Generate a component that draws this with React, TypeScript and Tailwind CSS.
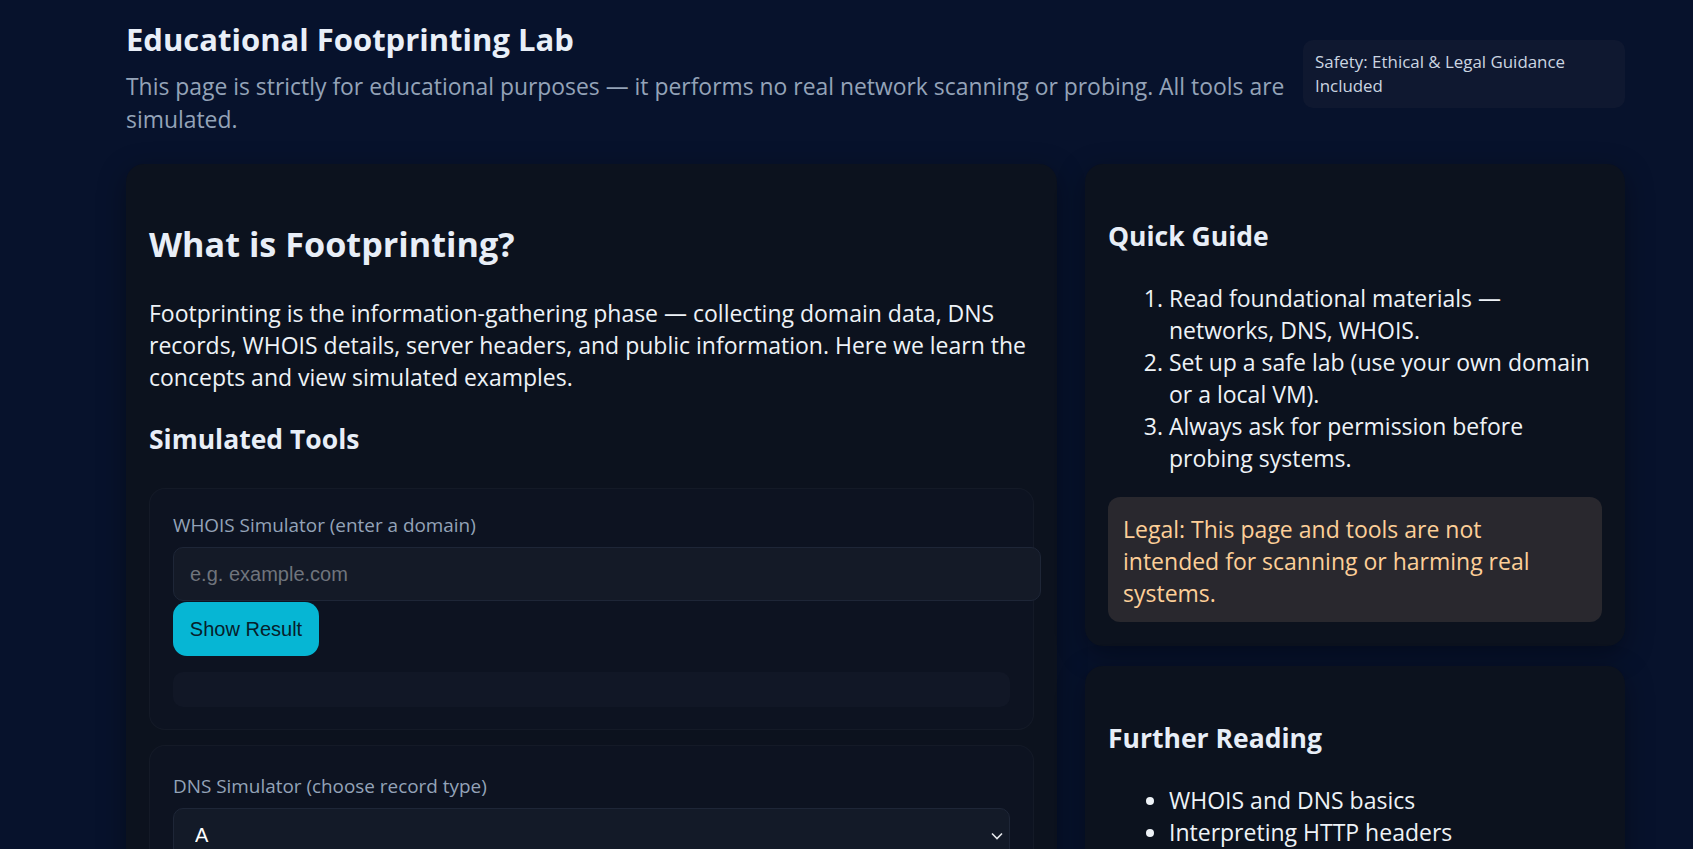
import { useState } from 'react'

// Учебная страница — всё симулировано, никаких реальных запросов.

const recordTypes = ['A', 'AAAA', 'MX', 'NS', 'TXT', 'CNAME']

export default function App() {
  const [domain, setDomain] = useState('')
  const [whoisResult, setWhoisResult] = useState('')
  const [record, setRecord] = useState('A')

  const showWhois = () => {
    if (!domain) return
    setWhoisResult(`Domain: ${domain} — Registrar: Example Registrar (simulated)`)
  }

  return (
    <div className="min-h-screen bg-[#07122c] pb-10 font-['Open_Sans',sans-serif]">
      <div className="ml-[126px] w-[1499px] pt-[19px]">
        {/* Header */}
        <header className="flex items-start gap-3">
          <div className="flex-1">
            <h1 className="text-[31px] font-bold leading-[40px] text-[#e9eff8]">
              Educational Footprinting Lab
            </h1>
            <p className="mt-[11px] text-[22.9px] leading-[33px] text-[#94a3b8]">
              This page is strictly for educational purposes — it performs no real network scanning or
              probing. All tools are simulated.
            </p>
          </div>
          <div className="mt-[21px] w-[322px] rounded-[10px] bg-[#0f1830] px-3 py-[10px] text-[16.9px] leading-6 text-[#cbd5e1]">
            Safety: Ethical &amp; Legal Guidance Included
          </div>
        </header>

        <main className="mt-[28px] grid grid-cols-[931px_540px] items-start gap-[28px]">
          {/* Left card */}
          <section className="rounded-[18px] bg-[#0c121e] px-[23px] pb-10 pt-[23px] shadow-[0_8px_28px_rgba(0,0,0,0.35)]">
            <h2 className="mt-[35px] text-[34.2px] font-bold leading-[44px] text-[#e8eef7]">
              What is Footprinting?
            </h2>
            <p className="mt-[31px] text-[23px] leading-[32px] text-[#eef2f7]">
              Footprinting is the information-gathering phase — collecting domain data, DNS records, WHOIS
              details, server headers, and public information. Here we learn the concepts and view
              simulated examples.
            </p>
            <h3 className="mt-[28px] text-[26.5px] font-bold leading-[36px] text-[#e8eef7]">
              Simulated Tools
            </h3>

            {/* WHOIS */}
            <div className="mt-[31px] rounded-[16px] border border-white/[0.03] bg-[#0d1321] px-[23px] pb-[22px] pt-[23px]">
              <label className="block text-[18.9px] leading-[26px] text-[#94a3b8]">
                WHOIS Simulator (enter a domain)
              </label>
              <input
                value={domain}
                onChange={(e) => setDomain(e.target.value)}
                placeholder="e.g. example.com"
                className="mt-[9px] block h-[54px] w-[868px] rounded-[10px] border border-[#1e2637] bg-[#141a27] px-4 font-['Liberation_Sans',sans-serif] text-[20px] text-[#e5e7eb] placeholder:text-[#6f747c] focus:outline-none"
              />
              <button
                onClick={showWhois}
                className="mt-px block h-[54px] w-[146px] rounded-[14px] bg-[#06b6d4] font-['Liberation_Sans',sans-serif] text-[20px] text-[#06202b]"
              >
                Show Result
              </button>
              <div className="mt-4 h-[35px] rounded-[10px] bg-[#111726] px-3 text-[16px] leading-[35px] text-[#cbd5e1]">
                {whoisResult}
              </div>
            </div>

            {/* DNS */}
            <div className="mt-[15px] rounded-[16px] border border-white/[0.03] bg-[#0d1321] px-[23px] pb-[22px] pt-[27px]">
              <label className="block text-[18.9px] leading-[26px] text-[#94a3b8]">
                DNS Simulator (choose record type)
              </label>
              <div className="relative mt-[9px]">
                <select
                  value={record}
                  onChange={(e) => setRecord(e.target.value)}
                  className="block h-[54px] w-full appearance-none rounded-[10px] border border-[#1e2637] bg-[#131a28] pl-[21px] font-['Liberation_Sans',sans-serif] text-[20px] text-white focus:outline-none"
                >
                  {recordTypes.map((t) => (
                    <option key={t} value={t}>
                      {t}
                    </option>
                  ))}
                </select>
                <svg
                  className="pointer-events-none absolute right-[7px] top-[24px] h-[8px] w-[12px]"
                  viewBox="0 0 12 8"
                  fill="none"
                  stroke="#e5e7eb"
                  strokeWidth="1.6"
                >
                  <path d="M1 1.5l5 5 5-5" />
                </svg>
              </div>
              <div className="mt-4 h-[35px] rounded-[10px] bg-[#111726]" />
            </div>
          </section>

          {/* Right column */}
          <aside className="flex flex-col gap-5">
            <section className="rounded-[18px] bg-[#0c121e] px-[23px] pb-[24px] pt-[23px] shadow-[0_8px_28px_rgba(0,0,0,0.35)]">
              <h3 className="mt-[31px] text-[26.5px] font-bold leading-[36px] text-[#e8eef7]">
                Quick Guide
              </h3>
              <ol className="mt-[28px] list-decimal pl-[61px] text-[23px] leading-[32px] text-[#eef2f7]">
                <li>Read foundational materials — networks, DNS, WHOIS.</li>
                <li>Set up a safe lab (use your own domain or a local VM).</li>
                <li>Always ask for permission before probing systems.</li>
              </ol>
              <div className="mt-[23px] rounded-[12px] bg-[#29282e] px-[15px] pb-[13px] pt-[16px] text-[23px] leading-[32px] text-[#fdcf98]">
                <p className="max-w-[440px]">
                  Legal: This page and tools are not intended for scanning or harming real systems.
                </p>
              </div>
            </section>

            <section className="rounded-[18px] bg-[#0c121e] px-[23px] pb-[24px] pt-[23px] shadow-[0_8px_28px_rgba(0,0,0,0.35)]">
              <h3 className="mt-[31px] text-[26.5px] font-bold leading-[36px] text-[#e8eef7]">
                Further Reading
              </h3>
              <ul className="mt-[28px] list-disc pl-[61px] text-[23px] leading-[32px] text-[#eef2f7]">
                <li>WHOIS and DNS basics</li>
                <li>Interpreting HTTP headers</li>
              </ul>
            </section>
          </aside>
        </main>
      </div>
    </div>
  )
}
